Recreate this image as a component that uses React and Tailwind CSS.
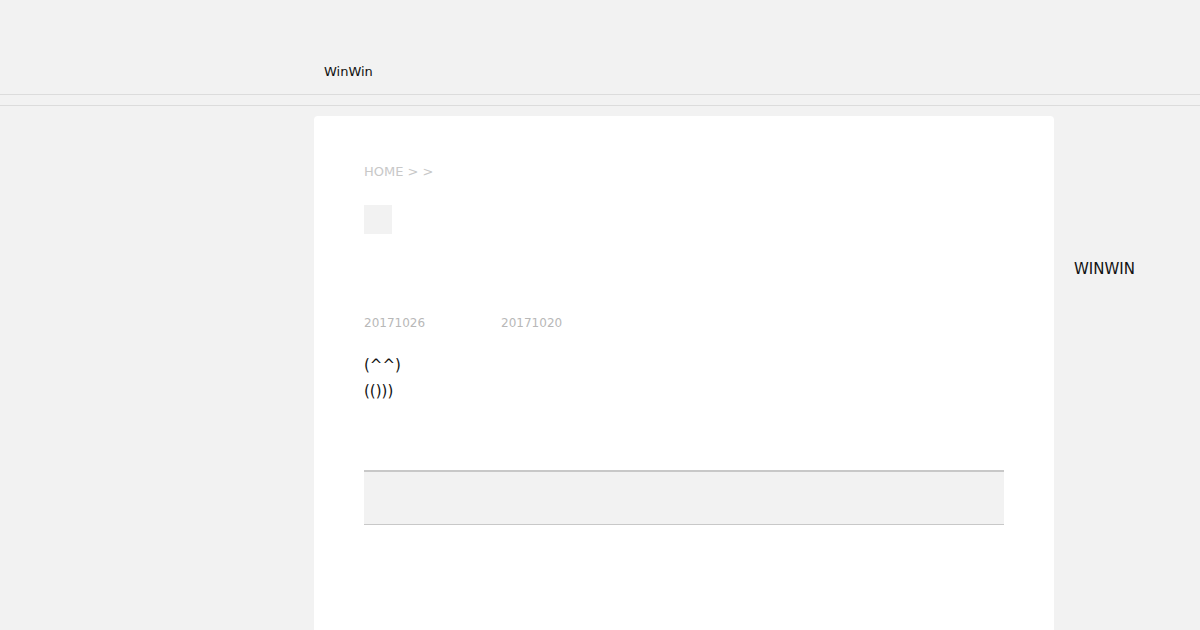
import React from 'react';

const App = () => {
  return (
    <div className="min-h-[630px] bg-[#f2f2f2] font-['DejaVu_Sans',sans-serif] text-[#111]">
      {/* Header */}
      <header className="h-[95px] border-b border-[#dcdcdc]">
        <div className="ml-[314px] pl-[10px] pt-[63px] text-[13px] leading-[18px]">WinWin</div>
      </header>
      <div className="h-[11px] border-b border-[#dcdcdc]" />

      {/* Body */}
      <div className="ml-[314px] mt-[10px] flex items-start">
        <main className="w-[740px] min-h-[520px] rounded-t-[4px] bg-white px-[50px] pt-[46px]">
          <div className="text-[13px] leading-[20px] text-[#c8c8c8]">HOME &gt; &gt;</div>
          <div className="mt-[23px] h-[29px] w-[28px] bg-[#f2f2f2]" />
          <div className="mt-[81px] flex gap-[76px] text-[12px] leading-[16px] text-[#b8b8b8]">
            <span>20171026</span>
            <span>20171020</span>
          </div>
          <div className="mt-[21px] text-[15px] leading-[26px]">
            <p>(^^)</p>
            <p>(()))</p>
          </div>
          <div className="mt-[66px] h-[55px] border-t-2 border-b border-[#c8c8c8] bg-[#f2f2f2]" />
        </main>
        <aside className="ml-[20px] pt-[143px] text-[15px] leading-[20px]">WINWIN</aside>
      </div>
    </div>
  );
};

export default App;
